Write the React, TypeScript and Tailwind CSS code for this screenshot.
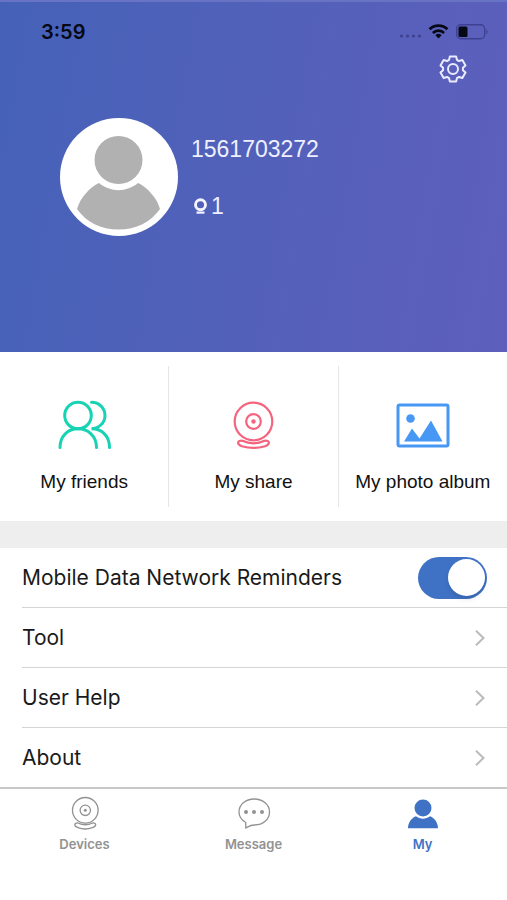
import type { ReactNode } from "react";

const gearPoints = Array.from({ length: 6 })
  .flatMap((_, tooth) =>
    [
      [-23, 10],
      [-14, 13],
      [14, 13],
      [23, 10],
    ].map(([offset, radius]) => {
      const angle = ((tooth * 60 + offset - 90) * Math.PI) / 180;
      return `${(15 + radius * Math.cos(angle)).toFixed(2)},${(15 + radius * Math.sin(angle)).toFixed(2)}`;
    }),
  )
  .join(" ");

function GearIcon() {
  return (
    <svg className="size-[30px]" viewBox="0 0 30 30" fill="none" stroke="#e9ebff" strokeWidth="2" strokeLinejoin="round" aria-hidden="true">
      <polygon points={gearPoints} />
      <circle cx="15" cy="15" r="5" />
    </svg>
  );
}

function StatusIcons() {
  return (
    <svg className="h-5 w-[90px]" viewBox="0 0 90 20" aria-hidden="true">
      <g fill="#3e4190">
        <circle cx="2.5" cy="14" r="1.6" />
        <circle cx="8.5" cy="14" r="1.6" />
        <circle cx="14.5" cy="14" r="1.6" />
        <circle cx="20.5" cy="14" r="1.6" />
      </g>
      <g fill="none" stroke="#060914" strokeWidth="2.8">
        <path d="M30.6 7.3a12.6 12.6 0 0 1 17.8 0" />
        <path d="M33.9 11a8 8 0 0 1 11.2 0" />
      </g>
      <path d="M36.4 13.2a4.5 4.5 0 0 1 6.2 0L39.5 16.6z" fill="#060914" />
      <rect x="57.7" y="2.7" width="28" height="14" rx="4" fill="none" stroke="#3e4190" strokeWidth="1.4" />
      <rect x="59.5" y="4.5" width="9" height="10.5" rx="1.5" fill="#060914" />
      <path d="M87.3 7.4c1.7.6 1.7 4 0 4.7z" fill="#3e4190" />
    </svg>
  );
}

function Avatar() {
  return (
    <svg className="size-[118px] shrink-0" viewBox="0 0 118 118" role="img" aria-label="Profile photo">
      <circle cx="59" cy="59" r="59" fill="#fff" />
      <circle cx="58.5" cy="42" r="24" fill="#b1b1b1" />
      <path d="M39 65C30 69 20 80 17 91C26 104 41 111.5 58.5 111.5C76 111.5 91 104 100 91C97 80 87 69 78 65C67 74.5 50 74.5 39 65Z" fill="#b1b1b1" />
    </svg>
  );
}

function CameraBadge() {
  return (
    <svg className="h-5 w-[18px]" viewBox="0 0 18 20" fill="none" stroke="#f4f5ff" aria-hidden="true">
      <circle cx="9.5" cy="8.8" r="5" strokeWidth="2.9" />
      <path d="M5.5 16.6h8" strokeWidth="2.2" />
    </svg>
  );
}

function FriendsIcon() {
  return (
    <svg className="h-[52px] w-14" viewBox="0 0 56 52" fill="none" stroke="#17d3b3" strokeWidth="3" strokeLinecap="round" aria-hidden="true">
      <circle cx="22" cy="16.5" r="13.3" />
      <path d="M4 48.5C4 37 12 29.8 22 29.8S40.500 37 40.500 48.5" />
      <path d="M35.5 3.3C43 3.300 49 9 49 16.5S43 29.300 35.500 29.800C46 29.800 53.500 37 53.500 48.5" />
    </svg>
  );
}

function ShareIcon() {
  return (
    <svg className="h-[52px] w-14" viewBox="0 0 56 52" fill="none" stroke="#f4647f" strokeWidth="2.2" aria-hidden="true">
      <circle cx="28.5" cy="22.500" r="18.8" />
      <circle cx="28.5" cy="22.500" r="7.3" />
      <circle cx="28.5" cy="22.500" r="2.2" fill="#f4647f" stroke="none" />
      <path d="M17.500 41.8C12 41 11.500 45.500 17 47.300C24 49.300 33 49.300 40 47.300C45.500 45.500 45 41 39.500 41.800C32.500 45 24.500 45 17.500 41.800Z" />
    </svg>
  );
}

function AlbumIcon() {
  return (
    <svg className="h-[52px] w-14" viewBox="0 0 56 52" fill="none" aria-hidden="true">
      <rect x="3" y="6" width="50" height="41" rx="1.5" stroke="#4798f5" strokeWidth="3" />
      <circle cx="15.5" cy="19.5" r="4.3" fill="#4798f5" />
      <path d="M9 42.500L17 29.500L24.500 39.500L36 21.500L47.500 42.500Z" fill="#4798f5" />
    </svg>
  );
}

function DevicesIcon() {
  return (
    <svg className="size-9" viewBox="0 0 36 36" fill="none" stroke="#929292" strokeWidth="1.3" aria-hidden="true">
      <circle cx="18.300" cy="15.3" r="12.8" />
      <circle cx="18.300" cy="15.300" r="5.2" />
      <circle cx="18.300" cy="15.300" r="1.5" fill="#929292" stroke="none" />
      <path d="M11 28C7 27.600 6.500 31 11 32.700C15.500 34.300 21 34.300 25.500 32.700C30 31 29.500 27.600 25.500 28C21 30.200 15.500 30.200 11 28Z" />
    </svg>
  );
}

function MessageIcon() {
  return (
    <svg className="size-9" viewBox="0 0 36 36" fill="none" stroke="#929292" strokeWidth="1.3" aria-hidden="true">
      <path d="M9.8 27.5C5.5 25 3 21 3 17C3 9.5 9.500 4 18.200 4S33.500 9.500 33.500 17S27 30 18.500 30C14.500 30 12.500 31.500 9.700 33Z" strokeLinejoin="round" />
      <g fill="#929292" stroke="none">
        <circle cx="10" cy="17" r="2" />
        <circle cx="18" cy="17" r="2" />
        <circle cx="26" cy="17" r="2" />
      </g>
    </svg>
  );
}

function MyIcon() {
  return (
    <svg className="size-9" viewBox="0 0 36 36" fill="#3f72c5" aria-hidden="true">
      <circle cx="18" cy="13" r="8.5" />
      <path d="M11 21.2C15 24.500 21 24.500 25 21.200C30 23 33 28 33 33.300H3C3 28 6 23 11 21.200Z" />
    </svg>
  );
}

function Chevron() {
  return (
    <svg className="h-4 w-3" viewBox="0 0 12 16" fill="none" stroke="#bbb" strokeWidth="2" aria-hidden="true">
      <path d="M1 .8L8.500 8L1 15.200" />
    </svg>
  );
}

function Tile({ icon, label }: { icon: ReactNode; label: string }) {
  return (
    <button type="button" className="flex h-[141px] flex-1 flex-col items-center gap-[19px] whitespace-nowrap border-r border-[#e6e6e6] pt-[33px] text-[19px] leading-6 text-[#111] last:border-r-0">
      {icon}
      {label}
    </button>
  );
}

function LinkRow({ label }: { label: string }) {
  return (
    <li className="ml-[22px] border-t border-[#d4d4d4]">
      <a href="#" className="flex h-[59px] items-center justify-between pr-5">
        {label}
        <Chevron />
      </a>
    </li>
  );
}

function Tab({ icon, label, active = false }: { icon: ReactNode; label: string; active?: boolean }) {
  return (
    <a href="#" aria-current={active ? "page" : undefined} className={`flex flex-1 flex-col items-center gap-[5px] pt-[6px] text-[13px] leading-4 font-semibold ${active ? "text-[#3f72c5]" : "text-[#929292]"}`}>
      {icon}
      {label}
    </a>
  );
}

export default function App() {
  return (
    <div className="flex min-h-screen flex-col bg-white font-['Inter',sans-serif]">
      <header className="flex h-[352px] flex-col bg-linear-100 from-[#4562b8] to-[#5e5fbc]">
        <div className="flex h-[54px] items-center justify-between border-t-2 border-[#6873c5] pt-2 pr-[18px] pl-[41px]">
          <time className="text-xl leading-6 font-semibold text-[#060914]">3:59</time>
          <StatusIcons />
        </div>
        <button type="button" aria-label="Settings" className="mr-[39px] self-end">
          <GearIcon />
        </button>
        <div className="mt-[34px] flex gap-[13px] pl-[60px] font-['Liberation_Sans',sans-serif] text-[23px] leading-7 text-[#eef0ff]">
          <Avatar />
          <div className="flex flex-col gap-[29px] pt-[17px]">
            <h1>1561703272</h1>
            <p className="flex items-center gap-[2px]">
              <CameraBadge />1
            </p>
          </div>
        </div>
      </header>

      <section className="flex border-b-[27px] border-[#eee] py-[14px] font-['Liberation_Sans',sans-serif]">
        <Tile icon={<FriendsIcon />} label="My friends" />
        <Tile icon={<ShareIcon />} label="My share" />
        <Tile icon={<AlbumIcon />} label="My photo album" />
      </section>

      <ul className="text-[21px] leading-7 text-[#1a1a1a]">
        <li>
          <label className="flex h-[59px] items-center justify-between pr-5 pl-[22px]">
            Mobile Data Network Reminders
            <input
              type="checkbox"
              role="switch"
              defaultChecked
              className="flex h-[42px] w-[69px] appearance-none items-center rounded-full bg-[#ccc] px-[2px] before:size-[37px] before:rounded-full before:bg-white before:shadow-md checked:justify-end checked:bg-[#3f72c5]"
            />
          </label>
        </li>
        <LinkRow label="Tool" />
        <LinkRow label="User Help" />
        <LinkRow label="About" />
      </ul>

      <nav className="flex flex-1 border-t-2 border-[#c8c8c8]">
        <Tab icon={<DevicesIcon />} label="Devices" />
        <Tab icon={<MessageIcon />} label="Message" />
        <Tab icon={<MyIcon />} label="My" active />
      </nav>
    </div>
  );
}
